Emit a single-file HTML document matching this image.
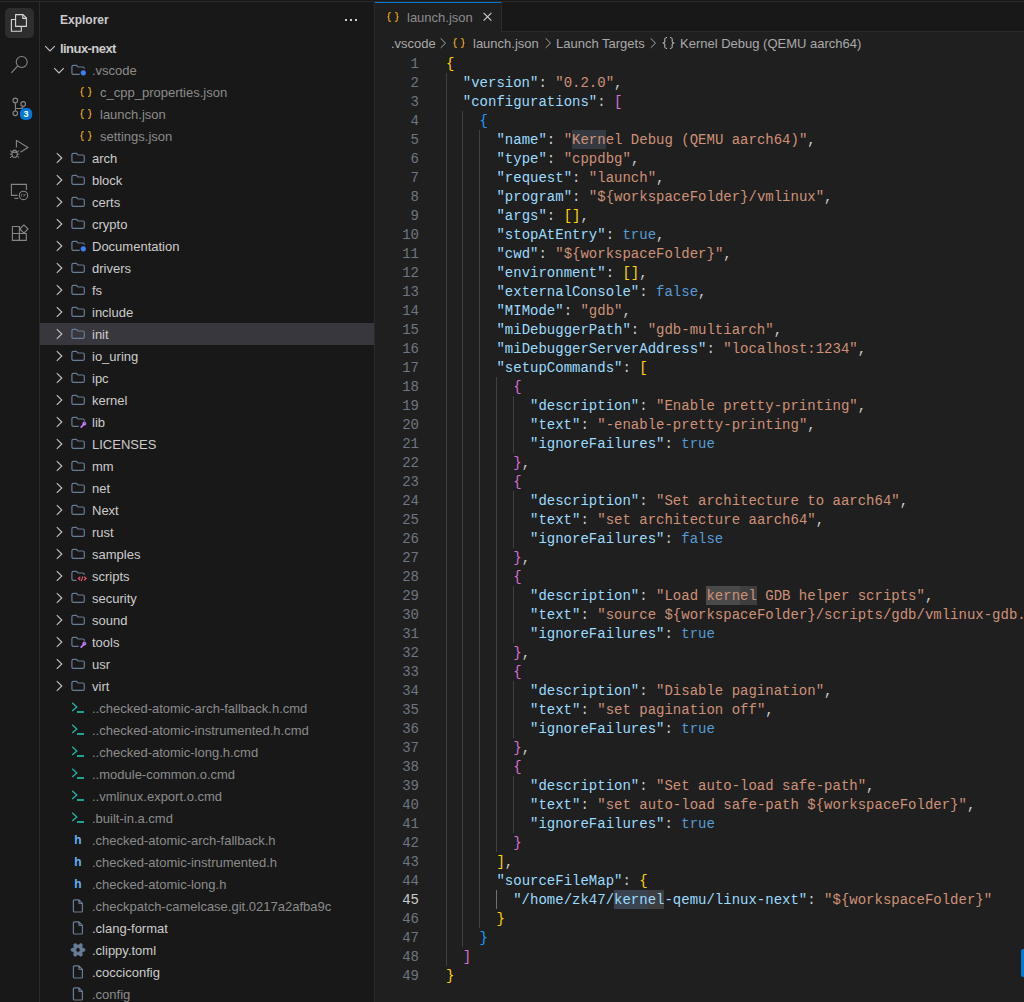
<!DOCTYPE html>
<html><head><meta charset="utf-8"><style>
*{margin:0;padding:0;box-sizing:border-box}
html,body{width:1024px;height:1002px;overflow:hidden;background:#181818}
body{position:relative;font-family:"Liberation Sans",sans-serif;font-size:13px}
.ic{position:absolute;overflow:visible}
.ig{position:absolute;width:1px;height:19px}
.hl{position:absolute;height:19px}
.ln{position:absolute;left:380px;width:39px;height:19px;text-align:right;font:14px/19px "Liberation Mono",monospace}
.cl{position:absolute;left:446px;height:19px;white-space:pre;font:14px/19px "Liberation Mono",monospace}
.tx{position:absolute;height:22px;line-height:22px;white-space:pre;font-size:13px}
.sel{position:absolute;left:40px;width:334px;height:22px;background:#37373d}
.jic{position:absolute;width:16px;height:22px;line-height:22px;color:#e8a02f;font:11px/22px "Liberation Sans",sans-serif;text-align:center;letter-spacing:1px}
.hic{position:absolute;width:16px;height:22px;color:#5fb2f5;font:bold 12px/22px "Liberation Sans",sans-serif;text-align:center}
</style></head><body>
<div style="position:absolute;left:0;top:1px;width:1024px;height:1px;background:#2b2b2b"></div>
<div style="position:absolute;left:39px;top:2px;width:1px;height:1000px;background:#2b2b2b"></div>
<div style="position:absolute;left:374px;top:2px;width:1px;height:1000px;background:#2b2b2b"></div>

<div style="position:absolute;left:5px;top:8px;width:29px;height:30px;border-radius:5px;background:#2e2e2e"></div>
<svg class="ic" style="left:0;top:0" width="40" height="250" viewBox="0 0 40 250">
<g fill="none" stroke="#d7d7d7" stroke-width="1.1" stroke-linejoin="round">
<path d="M15.6 14.6H23L26.4 18V26.4H15.6Z"/><path d="M22.8 14.6V18.4H26.4"/><path d="M15.6 19.5H11.4V31.3H21.3V26.4"/>
</g>
<g fill="none" stroke="#868686" stroke-width="1.1">
<circle cx="21.7" cy="62" r="5.5"/><path d="M17.6 66.2L11.3 72.9" stroke-width="1.2"/>
<circle cx="15.3" cy="100.4" r="2.3"/><circle cx="23.2" cy="103.9" r="2.3"/><circle cx="15.3" cy="113.3" r="2.3"/>
<path d="M15.4 102.7V111"/><path d="M15.6 108.5H20.5C22 108.5 23 107.6 23 106.2"/>
<path d="M16.4 147.6V140.4L28 147.5L20.4 152.3" stroke-linejoin="round"/>
<ellipse cx="14.6" cy="154" rx="2.6" ry="3.4"/><path d="M12.3 151.4C12.8 149.6 16.4 149.6 16.9 151.4M10 150.5L12 152.2M19.2 150.5L17.2 152.2M9.8 154.2H12M17.2 154.2H19.4M10 157.8L12 156.2M19.2 157.8L17.2 156.2M11.8 152.4H17.4" stroke-width="1"/>
<path d="M17.6 195.4H11.4V184.4H26.4V190"/><path d="M14.3 198.4H18.4"/><circle cx="23.5" cy="195.4" r="4.2"/><path d="M22 194l-.8 2.6M23.4 194.2l1.4 1.2-1.4 1.2M25.6 194l-.6 1" stroke-width=".8"/>
<path d="M12.4 226.5H19.4V240.4H12.4Z"/><path d="M12.4 233.5H26.3V240.4H19.4V233.5"/><path d="M23.9 224.9L28 229L23.9 233.1L19.8 229Z" stroke-linejoin="round"/>
</g>
<rect x="20" y="108" width="12.2" height="12" rx="5" fill="#0078d4"/>
</svg>
<div style="position:absolute;left:20px;top:108px;width:12.2px;height:12px;color:#fff;font:bold 9px/12px 'Liberation Sans',sans-serif;text-align:center">3</div>

<div style="position:absolute;left:60px;top:3px;height:35px;line-height:35px;color:#cccccc;font-weight:bold;font-size:12px">Explorer</div>
<div style="position:absolute;left:345px;top:19px;width:2px;height:2px;background:#cccccc"></div><div style="position:absolute;left:350px;top:19px;width:2px;height:2px;background:#cccccc"></div><div style="position:absolute;left:355px;top:19px;width:2px;height:2px;background:#cccccc"></div>
<svg class="ic" style="left:42px;top:40px" width="16" height="16" viewBox="0 0 16 16"><path d="M3.2 6.2l4.8 4.8 4.8-4.8" fill="none" stroke="#c5c5c5" stroke-width="1.1"/></svg><div class="tx" style="left:60px;top:38px;color:#cccccc;font-weight:bold;letter-spacing:-0.55px;">linux-next</div><svg class="ic" style="left:51px;top:62px" width="16" height="16" viewBox="0 0 16 16"><path d="M3.2 6.2l4.8 4.8 4.8-4.8" fill="none" stroke="#c5c5c5" stroke-width="1.1"/></svg><svg class="ic" style="left:70px;top:62px" width="16" height="16" viewBox="0 0 16 16"><path d="M9.8 12.3H3.3C2.5 12.3 1.9 11.7 1.9 10.9V4.8C1.9 4 2.5 3.4 3.3 3.4H6.4L8 5H12.9C13.7 5 14.3 5.6 14.3 6.4V6.8" fill="none" stroke="#687c96" stroke-width="1.2" stroke-linejoin="round"/><circle cx="13.3" cy="10.8" r="2.6" fill="#3e7ff5"/></svg><div class="tx" style="left:92px;top:60px;color:#8c8c8c;">.vscode</div><svg class="ic" style="left:78px;top:84px" width="16" height="16" viewBox="0 0 16 16"><path d="M5.4 3.6C4.3 3.6 3.8 4.1 3.8 5V7C3.8 7.6 3.3 8 2.5 8C3.3 8 3.8 8.4 3.8 9V11C3.8 11.9 4.3 12.4 5.4 12.4M10.6 3.6C11.7 3.6 12.2 4.1 12.2 5V7C12.2 7.6 12.7 8 13.5 8C12.7 8 12.2 8.4 12.2 9V11C12.2 11.9 11.7 12.4 10.6 12.4" fill="none" stroke="#e8a11c" stroke-width="1.15" stroke-linecap="round"/></svg><div class="tx" style="left:100px;top:82px;color:#8c8c8c;">c_cpp_properties.json</div><svg class="ic" style="left:78px;top:106px" width="16" height="16" viewBox="0 0 16 16"><path d="M5.4 3.6C4.3 3.6 3.8 4.1 3.8 5V7C3.8 7.6 3.3 8 2.5 8C3.3 8 3.8 8.4 3.8 9V11C3.8 11.9 4.3 12.4 5.4 12.4M10.6 3.6C11.7 3.6 12.2 4.1 12.2 5V7C12.2 7.6 12.7 8 13.5 8C12.7 8 12.2 8.4 12.2 9V11C12.2 11.9 11.7 12.4 10.6 12.4" fill="none" stroke="#e8a11c" stroke-width="1.15" stroke-linecap="round"/></svg><div class="tx" style="left:100px;top:104px;color:#8c8c8c;">launch.json</div><svg class="ic" style="left:78px;top:128px" width="16" height="16" viewBox="0 0 16 16"><path d="M5.4 3.6C4.3 3.6 3.8 4.1 3.8 5V7C3.8 7.6 3.3 8 2.5 8C3.3 8 3.8 8.4 3.8 9V11C3.8 11.9 4.3 12.4 5.4 12.4M10.6 3.6C11.7 3.6 12.2 4.1 12.2 5V7C12.2 7.6 12.7 8 13.5 8C12.7 8 12.2 8.4 12.2 9V11C12.2 11.9 11.7 12.4 10.6 12.4" fill="none" stroke="#e8a11c" stroke-width="1.15" stroke-linecap="round"/></svg><div class="tx" style="left:100px;top:126px;color:#8c8c8c;">settings.json</div><svg class="ic" style="left:51px;top:150px" width="16" height="16" viewBox="0 0 16 16"><path d="M5.8 3.2l5 4.8-5 4.8" fill="none" stroke="#c5c5c5" stroke-width="1.1"/></svg><svg class="ic" style="left:70px;top:150px" width="16" height="16" viewBox="0 0 16 16"><path d="M1.9 4.8C1.9 4 2.5 3.4 3.3 3.4H6.4L8 5H12.9C13.7 5 14.3 5.6 14.3 6.4V10.9C14.3 11.7 13.7 12.3 12.9 12.3H3.3C2.5 12.3 1.9 11.7 1.9 10.9Z" fill="none" stroke="#687c96" stroke-width="1.2" stroke-linejoin="round"/></svg><div class="tx" style="left:92px;top:148px;color:#cccccc;">arch</div><svg class="ic" style="left:51px;top:172px" width="16" height="16" viewBox="0 0 16 16"><path d="M5.8 3.2l5 4.8-5 4.8" fill="none" stroke="#c5c5c5" stroke-width="1.1"/></svg><svg class="ic" style="left:70px;top:172px" width="16" height="16" viewBox="0 0 16 16"><path d="M1.9 4.8C1.9 4 2.5 3.4 3.3 3.4H6.4L8 5H12.9C13.7 5 14.3 5.6 14.3 6.4V10.9C14.3 11.7 13.7 12.3 12.9 12.3H3.3C2.5 12.3 1.9 11.7 1.9 10.9Z" fill="none" stroke="#687c96" stroke-width="1.2" stroke-linejoin="round"/></svg><div class="tx" style="left:92px;top:170px;color:#cccccc;">block</div><svg class="ic" style="left:51px;top:194px" width="16" height="16" viewBox="0 0 16 16"><path d="M5.8 3.2l5 4.8-5 4.8" fill="none" stroke="#c5c5c5" stroke-width="1.1"/></svg><svg class="ic" style="left:70px;top:194px" width="16" height="16" viewBox="0 0 16 16"><path d="M1.9 4.8C1.9 4 2.5 3.4 3.3 3.4H6.4L8 5H12.9C13.7 5 14.3 5.6 14.3 6.4V10.9C14.3 11.7 13.7 12.3 12.9 12.3H3.3C2.5 12.3 1.9 11.7 1.9 10.9Z" fill="none" stroke="#687c96" stroke-width="1.2" stroke-linejoin="round"/></svg><div class="tx" style="left:92px;top:192px;color:#cccccc;">certs</div><svg class="ic" style="left:51px;top:216px" width="16" height="16" viewBox="0 0 16 16"><path d="M5.8 3.2l5 4.8-5 4.8" fill="none" stroke="#c5c5c5" stroke-width="1.1"/></svg><svg class="ic" style="left:70px;top:216px" width="16" height="16" viewBox="0 0 16 16"><path d="M1.9 4.8C1.9 4 2.5 3.4 3.3 3.4H6.4L8 5H12.9C13.7 5 14.3 5.6 14.3 6.4V10.9C14.3 11.7 13.7 12.3 12.9 12.3H3.3C2.5 12.3 1.9 11.7 1.9 10.9Z" fill="none" stroke="#687c96" stroke-width="1.2" stroke-linejoin="round"/></svg><div class="tx" style="left:92px;top:214px;color:#cccccc;">crypto</div><svg class="ic" style="left:51px;top:238px" width="16" height="16" viewBox="0 0 16 16"><path d="M5.8 3.2l5 4.8-5 4.8" fill="none" stroke="#c5c5c5" stroke-width="1.1"/></svg><svg class="ic" style="left:70px;top:238px" width="16" height="16" viewBox="0 0 16 16"><path d="M9.8 12.3H3.3C2.5 12.3 1.9 11.7 1.9 10.9V4.8C1.9 4 2.5 3.4 3.3 3.4H6.4L8 5H12.9C13.7 5 14.3 5.6 14.3 6.4V6.8" fill="none" stroke="#687c96" stroke-width="1.2" stroke-linejoin="round"/><circle cx="13.3" cy="10.8" r="2.6" fill="#3e7ff5"/></svg><div class="tx" style="left:92px;top:236px;color:#cccccc;">Documentation</div><svg class="ic" style="left:51px;top:260px" width="16" height="16" viewBox="0 0 16 16"><path d="M5.8 3.2l5 4.8-5 4.8" fill="none" stroke="#c5c5c5" stroke-width="1.1"/></svg><svg class="ic" style="left:70px;top:260px" width="16" height="16" viewBox="0 0 16 16"><path d="M1.9 4.8C1.9 4 2.5 3.4 3.3 3.4H6.4L8 5H12.9C13.7 5 14.3 5.6 14.3 6.4V10.9C14.3 11.7 13.7 12.3 12.9 12.3H3.3C2.5 12.3 1.9 11.7 1.9 10.9Z" fill="none" stroke="#687c96" stroke-width="1.2" stroke-linejoin="round"/></svg><div class="tx" style="left:92px;top:258px;color:#cccccc;">drivers</div><svg class="ic" style="left:51px;top:282px" width="16" height="16" viewBox="0 0 16 16"><path d="M5.8 3.2l5 4.8-5 4.8" fill="none" stroke="#c5c5c5" stroke-width="1.1"/></svg><svg class="ic" style="left:70px;top:282px" width="16" height="16" viewBox="0 0 16 16"><path d="M1.9 4.8C1.9 4 2.5 3.4 3.3 3.4H6.4L8 5H12.9C13.7 5 14.3 5.6 14.3 6.4V10.9C14.3 11.7 13.7 12.3 12.9 12.3H3.3C2.5 12.3 1.9 11.7 1.9 10.9Z" fill="none" stroke="#687c96" stroke-width="1.2" stroke-linejoin="round"/></svg><div class="tx" style="left:92px;top:280px;color:#cccccc;">fs</div><svg class="ic" style="left:51px;top:304px" width="16" height="16" viewBox="0 0 16 16"><path d="M5.8 3.2l5 4.8-5 4.8" fill="none" stroke="#c5c5c5" stroke-width="1.1"/></svg><svg class="ic" style="left:70px;top:304px" width="16" height="16" viewBox="0 0 16 16"><path d="M1.9 4.8C1.9 4 2.5 3.4 3.3 3.4H6.4L8 5H12.9C13.7 5 14.3 5.6 14.3 6.4V10.9C14.3 11.7 13.7 12.3 12.9 12.3H3.3C2.5 12.3 1.9 11.7 1.9 10.9Z" fill="none" stroke="#687c96" stroke-width="1.2" stroke-linejoin="round"/></svg><div class="tx" style="left:92px;top:302px;color:#cccccc;">include</div><div class="sel" style="top:323px"></div><svg class="ic" style="left:51px;top:326px" width="16" height="16" viewBox="0 0 16 16"><path d="M5.8 3.2l5 4.8-5 4.8" fill="none" stroke="#c5c5c5" stroke-width="1.1"/></svg><svg class="ic" style="left:70px;top:326px" width="16" height="16" viewBox="0 0 16 16"><path d="M1.9 4.8C1.9 4 2.5 3.4 3.3 3.4H6.4L8 5H12.9C13.7 5 14.3 5.6 14.3 6.4V10.9C14.3 11.7 13.7 12.3 12.9 12.3H3.3C2.5 12.3 1.9 11.7 1.9 10.9Z" fill="none" stroke="#687c96" stroke-width="1.2" stroke-linejoin="round"/></svg><div class="tx" style="left:92px;top:324px;color:#cccccc;">init</div><svg class="ic" style="left:51px;top:348px" width="16" height="16" viewBox="0 0 16 16"><path d="M5.8 3.2l5 4.8-5 4.8" fill="none" stroke="#c5c5c5" stroke-width="1.1"/></svg><svg class="ic" style="left:70px;top:348px" width="16" height="16" viewBox="0 0 16 16"><path d="M1.9 4.8C1.9 4 2.5 3.4 3.3 3.4H6.4L8 5H12.9C13.7 5 14.3 5.6 14.3 6.4V10.9C14.3 11.7 13.7 12.3 12.9 12.3H3.3C2.5 12.3 1.9 11.7 1.9 10.9Z" fill="none" stroke="#687c96" stroke-width="1.2" stroke-linejoin="round"/></svg><div class="tx" style="left:92px;top:346px;color:#cccccc;">io_uring</div><svg class="ic" style="left:51px;top:370px" width="16" height="16" viewBox="0 0 16 16"><path d="M5.8 3.2l5 4.8-5 4.8" fill="none" stroke="#c5c5c5" stroke-width="1.1"/></svg><svg class="ic" style="left:70px;top:370px" width="16" height="16" viewBox="0 0 16 16"><path d="M1.9 4.8C1.9 4 2.5 3.4 3.3 3.4H6.4L8 5H12.9C13.7 5 14.3 5.6 14.3 6.4V10.9C14.3 11.7 13.7 12.3 12.9 12.3H3.3C2.5 12.3 1.9 11.7 1.9 10.9Z" fill="none" stroke="#687c96" stroke-width="1.2" stroke-linejoin="round"/></svg><div class="tx" style="left:92px;top:368px;color:#cccccc;">ipc</div><svg class="ic" style="left:51px;top:392px" width="16" height="16" viewBox="0 0 16 16"><path d="M5.8 3.2l5 4.8-5 4.8" fill="none" stroke="#c5c5c5" stroke-width="1.1"/></svg><svg class="ic" style="left:70px;top:392px" width="16" height="16" viewBox="0 0 16 16"><path d="M1.9 4.8C1.9 4 2.5 3.4 3.3 3.4H6.4L8 5H12.9C13.7 5 14.3 5.6 14.3 6.4V10.9C14.3 11.7 13.7 12.3 12.9 12.3H3.3C2.5 12.3 1.9 11.7 1.9 10.9Z" fill="none" stroke="#687c96" stroke-width="1.2" stroke-linejoin="round"/></svg><div class="tx" style="left:92px;top:390px;color:#cccccc;">kernel</div><svg class="ic" style="left:51px;top:414px" width="16" height="16" viewBox="0 0 16 16"><path d="M5.8 3.2l5 4.8-5 4.8" fill="none" stroke="#c5c5c5" stroke-width="1.1"/></svg><svg class="ic" style="left:70px;top:414px" width="16" height="16" viewBox="0 0 16 16"><path d="M8.6 12.3H3.3C2.5 12.3 1.9 11.7 1.9 10.9V4.8C1.9 4 2.5 3.4 3.3 3.4H6.4L8 5H12.9C13.7 5 14.3 5.6 14.3 6.4V6.8" fill="none" stroke="#687c96" stroke-width="1.2" stroke-linejoin="round"/><path d="M11.2 13.1L14 10.2" stroke="#c77dff" stroke-width="1.7" stroke-linecap="round"/><circle cx="14.4" cy="9.5" r="1.9" fill="#c77dff"/><circle cx="14.9" cy="9" r=".6" fill="#181818"/></svg><div class="tx" style="left:92px;top:412px;color:#cccccc;">lib</div><svg class="ic" style="left:51px;top:436px" width="16" height="16" viewBox="0 0 16 16"><path d="M5.8 3.2l5 4.8-5 4.8" fill="none" stroke="#c5c5c5" stroke-width="1.1"/></svg><svg class="ic" style="left:70px;top:436px" width="16" height="16" viewBox="0 0 16 16"><path d="M1.9 4.8C1.9 4 2.5 3.4 3.3 3.4H6.4L8 5H12.9C13.7 5 14.3 5.6 14.3 6.4V10.9C14.3 11.7 13.7 12.3 12.9 12.3H3.3C2.5 12.3 1.9 11.7 1.9 10.9Z" fill="none" stroke="#687c96" stroke-width="1.2" stroke-linejoin="round"/></svg><div class="tx" style="left:92px;top:434px;color:#cccccc;">LICENSES</div><svg class="ic" style="left:51px;top:458px" width="16" height="16" viewBox="0 0 16 16"><path d="M5.8 3.2l5 4.8-5 4.8" fill="none" stroke="#c5c5c5" stroke-width="1.1"/></svg><svg class="ic" style="left:70px;top:458px" width="16" height="16" viewBox="0 0 16 16"><path d="M1.9 4.8C1.9 4 2.5 3.4 3.3 3.4H6.4L8 5H12.9C13.7 5 14.3 5.6 14.3 6.4V10.9C14.3 11.7 13.7 12.3 12.9 12.3H3.3C2.5 12.3 1.9 11.7 1.9 10.9Z" fill="none" stroke="#687c96" stroke-width="1.2" stroke-linejoin="round"/></svg><div class="tx" style="left:92px;top:456px;color:#cccccc;">mm</div><svg class="ic" style="left:51px;top:480px" width="16" height="16" viewBox="0 0 16 16"><path d="M5.8 3.2l5 4.8-5 4.8" fill="none" stroke="#c5c5c5" stroke-width="1.1"/></svg><svg class="ic" style="left:70px;top:480px" width="16" height="16" viewBox="0 0 16 16"><path d="M1.9 4.8C1.9 4 2.5 3.4 3.3 3.4H6.4L8 5H12.9C13.7 5 14.3 5.6 14.3 6.4V10.9C14.3 11.7 13.7 12.3 12.9 12.3H3.3C2.5 12.3 1.9 11.7 1.9 10.9Z" fill="none" stroke="#687c96" stroke-width="1.2" stroke-linejoin="round"/></svg><div class="tx" style="left:92px;top:478px;color:#cccccc;">net</div><svg class="ic" style="left:51px;top:502px" width="16" height="16" viewBox="0 0 16 16"><path d="M5.8 3.2l5 4.8-5 4.8" fill="none" stroke="#c5c5c5" stroke-width="1.1"/></svg><svg class="ic" style="left:70px;top:502px" width="16" height="16" viewBox="0 0 16 16"><path d="M1.9 4.8C1.9 4 2.5 3.4 3.3 3.4H6.4L8 5H12.9C13.7 5 14.3 5.6 14.3 6.4V10.9C14.3 11.7 13.7 12.3 12.9 12.3H3.3C2.5 12.3 1.9 11.7 1.9 10.9Z" fill="none" stroke="#687c96" stroke-width="1.2" stroke-linejoin="round"/></svg><div class="tx" style="left:92px;top:500px;color:#cccccc;">Next</div><svg class="ic" style="left:51px;top:524px" width="16" height="16" viewBox="0 0 16 16"><path d="M5.8 3.2l5 4.8-5 4.8" fill="none" stroke="#c5c5c5" stroke-width="1.1"/></svg><svg class="ic" style="left:70px;top:524px" width="16" height="16" viewBox="0 0 16 16"><path d="M1.9 4.8C1.9 4 2.5 3.4 3.3 3.4H6.4L8 5H12.9C13.7 5 14.3 5.6 14.3 6.4V10.9C14.3 11.7 13.7 12.3 12.9 12.3H3.3C2.5 12.3 1.9 11.7 1.9 10.9Z" fill="none" stroke="#687c96" stroke-width="1.2" stroke-linejoin="round"/></svg><div class="tx" style="left:92px;top:522px;color:#cccccc;">rust</div><svg class="ic" style="left:51px;top:546px" width="16" height="16" viewBox="0 0 16 16"><path d="M5.8 3.2l5 4.8-5 4.8" fill="none" stroke="#c5c5c5" stroke-width="1.1"/></svg><svg class="ic" style="left:70px;top:546px" width="16" height="16" viewBox="0 0 16 16"><path d="M1.9 4.8C1.9 4 2.5 3.4 3.3 3.4H6.4L8 5H12.9C13.7 5 14.3 5.6 14.3 6.4V10.9C14.3 11.7 13.7 12.3 12.9 12.3H3.3C2.5 12.3 1.9 11.7 1.9 10.9Z" fill="none" stroke="#687c96" stroke-width="1.2" stroke-linejoin="round"/></svg><div class="tx" style="left:92px;top:544px;color:#cccccc;">samples</div><svg class="ic" style="left:51px;top:568px" width="16" height="16" viewBox="0 0 16 16"><path d="M5.8 3.2l5 4.8-5 4.8" fill="none" stroke="#c5c5c5" stroke-width="1.1"/></svg><svg class="ic" style="left:70px;top:568px" width="16" height="16" viewBox="0 0 16 16"><path d="M6.5 12.3H3.3C2.5 12.3 1.9 11.7 1.9 10.9V4.8C1.9 4 2.5 3.4 3.3 3.4H6.4L8 5H12.9C13.7 5 14.3 5.6 14.3 6.4V6.8" fill="none" stroke="#687c96" stroke-width="1.2" stroke-linejoin="round"/><path d="M10.4 8.8L8.3 10.5L10.4 12.2M14.1 8.8L16.2 10.5L14.1 12.2M12.8 8.5L11.3 13.1" fill="none" stroke="#e8556a" stroke-width="1.1"/></svg><div class="tx" style="left:92px;top:566px;color:#cccccc;">scripts</div><svg class="ic" style="left:51px;top:590px" width="16" height="16" viewBox="0 0 16 16"><path d="M5.8 3.2l5 4.8-5 4.8" fill="none" stroke="#c5c5c5" stroke-width="1.1"/></svg><svg class="ic" style="left:70px;top:590px" width="16" height="16" viewBox="0 0 16 16"><path d="M1.9 4.8C1.9 4 2.5 3.4 3.3 3.4H6.4L8 5H12.9C13.7 5 14.3 5.6 14.3 6.4V10.9C14.3 11.7 13.7 12.3 12.9 12.3H3.3C2.5 12.3 1.9 11.7 1.9 10.9Z" fill="none" stroke="#687c96" stroke-width="1.2" stroke-linejoin="round"/></svg><div class="tx" style="left:92px;top:588px;color:#cccccc;">security</div><svg class="ic" style="left:51px;top:612px" width="16" height="16" viewBox="0 0 16 16"><path d="M5.8 3.2l5 4.8-5 4.8" fill="none" stroke="#c5c5c5" stroke-width="1.1"/></svg><svg class="ic" style="left:70px;top:612px" width="16" height="16" viewBox="0 0 16 16"><path d="M1.9 4.8C1.9 4 2.5 3.4 3.3 3.4H6.4L8 5H12.9C13.7 5 14.3 5.6 14.3 6.4V10.9C14.3 11.7 13.7 12.3 12.9 12.3H3.3C2.5 12.3 1.9 11.7 1.9 10.9Z" fill="none" stroke="#687c96" stroke-width="1.2" stroke-linejoin="round"/></svg><div class="tx" style="left:92px;top:610px;color:#cccccc;">sound</div><svg class="ic" style="left:51px;top:634px" width="16" height="16" viewBox="0 0 16 16"><path d="M5.8 3.2l5 4.8-5 4.8" fill="none" stroke="#c5c5c5" stroke-width="1.1"/></svg><svg class="ic" style="left:70px;top:634px" width="16" height="16" viewBox="0 0 16 16"><path d="M8.6 12.3H3.3C2.5 12.3 1.9 11.7 1.9 10.9V4.8C1.9 4 2.5 3.4 3.3 3.4H6.4L8 5H12.9C13.7 5 14.3 5.6 14.3 6.4V6.8" fill="none" stroke="#687c96" stroke-width="1.2" stroke-linejoin="round"/><path d="M11.2 13.1L14 10.2" stroke="#c77dff" stroke-width="1.7" stroke-linecap="round"/><circle cx="14.4" cy="9.5" r="1.9" fill="#c77dff"/><circle cx="14.9" cy="9" r=".6" fill="#181818"/></svg><div class="tx" style="left:92px;top:632px;color:#cccccc;">tools</div><svg class="ic" style="left:51px;top:656px" width="16" height="16" viewBox="0 0 16 16"><path d="M5.8 3.2l5 4.8-5 4.8" fill="none" stroke="#c5c5c5" stroke-width="1.1"/></svg><svg class="ic" style="left:70px;top:656px" width="16" height="16" viewBox="0 0 16 16"><path d="M1.9 4.8C1.9 4 2.5 3.4 3.3 3.4H6.4L8 5H12.9C13.7 5 14.3 5.6 14.3 6.4V10.9C14.3 11.7 13.7 12.3 12.9 12.3H3.3C2.5 12.3 1.9 11.7 1.9 10.9Z" fill="none" stroke="#687c96" stroke-width="1.2" stroke-linejoin="round"/></svg><div class="tx" style="left:92px;top:654px;color:#cccccc;">usr</div><svg class="ic" style="left:51px;top:678px" width="16" height="16" viewBox="0 0 16 16"><path d="M5.8 3.2l5 4.8-5 4.8" fill="none" stroke="#c5c5c5" stroke-width="1.1"/></svg><svg class="ic" style="left:70px;top:678px" width="16" height="16" viewBox="0 0 16 16"><path d="M1.9 4.8C1.9 4 2.5 3.4 3.3 3.4H6.4L8 5H12.9C13.7 5 14.3 5.6 14.3 6.4V10.9C14.3 11.7 13.7 12.3 12.9 12.3H3.3C2.5 12.3 1.9 11.7 1.9 10.9Z" fill="none" stroke="#687c96" stroke-width="1.2" stroke-linejoin="round"/></svg><div class="tx" style="left:92px;top:676px;color:#cccccc;">virt</div><svg class="ic" style="left:70px;top:700px" width="16" height="16" viewBox="0 0 16 16"><path d="M2.2 2.8l4.6 4.1-4.6 4.1" fill="none" stroke="#1fb5a4" stroke-width="1.3"/><path d="M7 12h7" stroke="#1fb5a4" stroke-width="1.8"/></svg><div class="tx" style="left:92px;top:698px;color:#8c8c8c;">..checked-atomic-arch-fallback.h.cmd</div><svg class="ic" style="left:70px;top:722px" width="16" height="16" viewBox="0 0 16 16"><path d="M2.2 2.8l4.6 4.1-4.6 4.1" fill="none" stroke="#1fb5a4" stroke-width="1.3"/><path d="M7 12h7" stroke="#1fb5a4" stroke-width="1.8"/></svg><div class="tx" style="left:92px;top:720px;color:#8c8c8c;">..checked-atomic-instrumented.h.cmd</div><svg class="ic" style="left:70px;top:744px" width="16" height="16" viewBox="0 0 16 16"><path d="M2.2 2.8l4.6 4.1-4.6 4.1" fill="none" stroke="#1fb5a4" stroke-width="1.3"/><path d="M7 12h7" stroke="#1fb5a4" stroke-width="1.8"/></svg><div class="tx" style="left:92px;top:742px;color:#8c8c8c;">..checked-atomic-long.h.cmd</div><svg class="ic" style="left:70px;top:766px" width="16" height="16" viewBox="0 0 16 16"><path d="M2.2 2.8l4.6 4.1-4.6 4.1" fill="none" stroke="#1fb5a4" stroke-width="1.3"/><path d="M7 12h7" stroke="#1fb5a4" stroke-width="1.8"/></svg><div class="tx" style="left:92px;top:764px;color:#8c8c8c;">..module-common.o.cmd</div><svg class="ic" style="left:70px;top:788px" width="16" height="16" viewBox="0 0 16 16"><path d="M2.2 2.8l4.6 4.1-4.6 4.1" fill="none" stroke="#1fb5a4" stroke-width="1.3"/><path d="M7 12h7" stroke="#1fb5a4" stroke-width="1.8"/></svg><div class="tx" style="left:92px;top:786px;color:#8c8c8c;">..vmlinux.export.o.cmd</div><svg class="ic" style="left:70px;top:810px" width="16" height="16" viewBox="0 0 16 16"><path d="M2.2 2.8l4.6 4.1-4.6 4.1" fill="none" stroke="#1fb5a4" stroke-width="1.3"/><path d="M7 12h7" stroke="#1fb5a4" stroke-width="1.8"/></svg><div class="tx" style="left:92px;top:808px;color:#8c8c8c;">.built-in.a.cmd</div><div class="hic" style="left:70px;top:829px">h</div><div class="tx" style="left:92px;top:830px;color:#8c8c8c;">.checked-atomic-arch-fallback.h</div><div class="hic" style="left:70px;top:851px">h</div><div class="tx" style="left:92px;top:852px;color:#8c8c8c;">.checked-atomic-instrumented.h</div><div class="hic" style="left:70px;top:873px">h</div><div class="tx" style="left:92px;top:874px;color:#8c8c8c;">.checked-atomic-long.h</div><svg class="ic" style="left:70px;top:898px" width="16" height="16" viewBox="0 0 16 16"><path d="M4.4 1.9H8.9L12.4 5.5V13C12.4 13.6 11.9 14 11.3 14H4.4C3.8 14 3.4 13.6 3.4 13V2.9C3.4 2.3 3.8 1.9 4.4 1.9Z M8.9 1.9V4.6C8.9 5.1 9.2 5.5 9.7 5.5H12.4" fill="none" stroke="#687c96" stroke-width="1.2" stroke-linejoin="round"/></svg><div class="tx" style="left:92px;top:896px;color:#8c8c8c;">.checkpatch-camelcase.git.0217a2afba9c</div><svg class="ic" style="left:70px;top:920px" width="16" height="16" viewBox="0 0 16 16"><path d="M4.4 1.9H8.9L12.4 5.5V13C12.4 13.6 11.9 14 11.3 14H4.4C3.8 14 3.4 13.6 3.4 13V2.9C3.4 2.3 3.8 1.9 4.4 1.9Z M8.9 1.9V4.6C8.9 5.1 9.2 5.5 9.7 5.5H12.4" fill="none" stroke="#687c96" stroke-width="1.2" stroke-linejoin="round"/></svg><div class="tx" style="left:92px;top:918px;color:#cccccc;">.clang-format</div><svg class="ic" style="left:70px;top:942px" width="16" height="16" viewBox="0 0 16 16"><path fill="#687c96" fill-rule="evenodd" stroke="#687c96" stroke-width="0.9" stroke-linejoin="round" d="M14.83 8.86 L14.83 6.94 L11.81 5.70 L12.25 2.46 L10.58 1.50 L8.00 3.50 L5.42 1.50 L3.75 2.46 L4.19 5.70 L1.17 6.94 L1.17 8.86 L4.19 10.10 L3.75 13.34 L5.42 14.30 L8.00 12.30 L10.58 14.30 L12.25 13.34 L11.81 10.10Z M8 5.5C6.8 5.5 5.8 6.6 5.8 7.9C5.8 9.2 6.8 10.3 8 10.3C9.2 10.3 10.2 9.2 10.2 7.9C10.2 6.6 9.2 5.5 8 5.5Z"/></svg><div class="tx" style="left:92px;top:940px;color:#cccccc;">.clippy.toml</div><svg class="ic" style="left:70px;top:964px" width="16" height="16" viewBox="0 0 16 16"><path d="M4.4 1.9H8.9L12.4 5.5V13C12.4 13.6 11.9 14 11.3 14H4.4C3.8 14 3.4 13.6 3.4 13V2.9C3.4 2.3 3.8 1.9 4.4 1.9Z M8.9 1.9V4.6C8.9 5.1 9.2 5.5 9.7 5.5H12.4" fill="none" stroke="#687c96" stroke-width="1.2" stroke-linejoin="round"/></svg><div class="tx" style="left:92px;top:962px;color:#cccccc;">.cocciconfig</div><svg class="ic" style="left:70px;top:986px" width="16" height="16" viewBox="0 0 16 16"><path d="M4.4 1.9H8.9L12.4 5.5V13C12.4 13.6 11.9 14 11.3 14H4.4C3.8 14 3.4 13.6 3.4 13V2.9C3.4 2.3 3.8 1.9 4.4 1.9Z M8.9 1.9V4.6C8.9 5.1 9.2 5.5 9.7 5.5H12.4" fill="none" stroke="#687c96" stroke-width="1.2" stroke-linejoin="round"/></svg><div class="tx" style="left:92px;top:984px;color:#8c8c8c;">.config</div>
<div style="position:absolute;left:375px;top:2px;width:649px;height:1000px;background:#1f1f1f"></div>
<div style="position:absolute;left:375px;top:2px;width:649px;height:29px;background:#181818"></div>
<div style="position:absolute;left:375px;top:31px;width:649px;height:1px;background:#2b2b2b"></div>
<div style="position:absolute;left:375px;top:2px;width:126px;height:30px;background:#1f1f1f"></div>
<div style="position:absolute;left:375px;top:2px;width:126px;height:1px;background:#0078d4"></div>
<div style="position:absolute;left:501px;top:2px;width:1px;height:29px;background:#2b2b2b"></div>
<svg class="ic" style="left:385px;top:9px" width="16" height="16" viewBox="0 0 16 16"><path d="M5.4 3.6C4.3 3.6 3.8 4.1 3.8 5V7C3.8 7.6 3.3 8 2.5 8C3.3 8 3.8 8.4 3.8 9V11C3.8 11.9 4.3 12.4 5.4 12.4M10.6 3.6C11.7 3.6 12.2 4.1 12.2 5V7C12.2 7.6 12.7 8 13.5 8C12.7 8 12.2 8.4 12.2 9V11C12.2 11.9 11.7 12.4 10.6 12.4" fill="none" stroke="#e8a11c" stroke-width="1.15" stroke-linecap="round"/></svg>
<div class="tx" style="left:407px;top:7px;color:#8c8c8c">launch.json</div>
<svg class="ic" style="left:480px;top:9px" width="16" height="16" viewBox="0 0 16 16"><path d="M3.6 3.9L11.4 11.7M11.4 3.9L3.6 11.7" stroke="#cccccc" stroke-width="1.15"/></svg>
<div class="tx" style="left:391px;top:33px;color:#a9a9a9">.vscode</div>
<svg class="ic" style="left:435px;top:35px" width="16" height="16" viewBox="0 0 16 16"><path d="M5.7 3.4l4.8 4.7-4.8 4.7" fill="none" stroke="#a9a9a9" stroke-width="1"/></svg>
<svg class="ic" style="left:451px;top:35px" width="16" height="16" viewBox="0 0 16 16"><path d="M5.4 3.6C4.3 3.6 3.8 4.1 3.8 5V7C3.8 7.6 3.3 8 2.5 8C3.3 8 3.8 8.4 3.8 9V11C3.8 11.9 4.3 12.4 5.4 12.4M10.6 3.6C11.7 3.6 12.2 4.1 12.2 5V7C12.2 7.6 12.7 8 13.5 8C12.7 8 12.2 8.4 12.2 9V11C12.2 11.9 11.7 12.4 10.6 12.4" fill="none" stroke="#e8a11c" stroke-width="1.15" stroke-linecap="round"/></svg>
<div class="tx" style="left:473px;top:33px;color:#a9a9a9">launch.json</div>
<svg class="ic" style="left:540px;top:35px" width="16" height="16" viewBox="0 0 16 16"><path d="M5.7 3.4l4.8 4.7-4.8 4.7" fill="none" stroke="#a9a9a9" stroke-width="1"/></svg>
<div class="tx" style="left:556px;top:33px;color:#a9a9a9">Launch Targets</div>
<svg class="ic" style="left:645px;top:35px" width="16" height="16" viewBox="0 0 16 16"><path d="M5.7 3.4l4.8 4.7-4.8 4.7" fill="none" stroke="#a9a9a9" stroke-width="1"/></svg>
<svg class="ic" style="left:660px;top:35px" width="16" height="16" viewBox="0 0 16 16"><path d="M7 2.5C5.6 2.5 4.8 3.2 4.8 4.3V6.9C4.8 7.5 4.2 8 2.8 8C4.2 8 4.8 8.5 4.8 9.1V11.7C4.8 12.8 5.6 13.5 7 13.5M10 2.5C11.4 2.5 12.2 3.2 12.2 4.3V6.9C12.2 7.5 12.8 8 14.2 8C12.8 8 12.2 8.5 12.2 9.1V11.7C12.2 12.8 11.4 13.5 10 13.5" fill="none" stroke="#cccccc" stroke-width="1"/></svg>
<div class="tx" style="left:680px;top:33px;color:#a9a9a9">Kernel Debug (QEMU aarch64)</div>
<div class="ig" style="left:445.5px;top:73px;background:#404040"></div><div class="ig" style="left:445.5px;top:92px;background:#404040"></div><div class="ig" style="left:445.5px;top:111px;background:#404040"></div><div class="ig" style="left:462.3px;top:111px;background:#404040"></div><div class="ig" style="left:445.5px;top:130px;background:#404040"></div><div class="ig" style="left:462.3px;top:130px;background:#404040"></div><div class="ig" style="left:479.1px;top:130px;background:#404040"></div><div class="ig" style="left:445.5px;top:149px;background:#404040"></div><div class="ig" style="left:462.3px;top:149px;background:#404040"></div><div class="ig" style="left:479.1px;top:149px;background:#404040"></div><div class="ig" style="left:445.5px;top:168px;background:#404040"></div><div class="ig" style="left:462.3px;top:168px;background:#404040"></div><div class="ig" style="left:479.1px;top:168px;background:#404040"></div><div class="ig" style="left:445.5px;top:187px;background:#404040"></div><div class="ig" style="left:462.3px;top:187px;background:#404040"></div><div class="ig" style="left:479.1px;top:187px;background:#404040"></div><div class="ig" style="left:445.5px;top:206px;background:#404040"></div><div class="ig" style="left:462.3px;top:206px;background:#404040"></div><div class="ig" style="left:479.1px;top:206px;background:#404040"></div><div class="ig" style="left:445.5px;top:225px;background:#404040"></div><div class="ig" style="left:462.3px;top:225px;background:#404040"></div><div class="ig" style="left:479.1px;top:225px;background:#404040"></div><div class="ig" style="left:445.5px;top:244px;background:#404040"></div><div class="ig" style="left:462.3px;top:244px;background:#404040"></div><div class="ig" style="left:479.1px;top:244px;background:#404040"></div><div class="ig" style="left:445.5px;top:263px;background:#404040"></div><div class="ig" style="left:462.3px;top:263px;background:#404040"></div><div class="ig" style="left:479.1px;top:263px;background:#404040"></div><div class="ig" style="left:445.5px;top:282px;background:#404040"></div><div class="ig" style="left:462.3px;top:282px;background:#404040"></div><div class="ig" style="left:479.1px;top:282px;background:#404040"></div><div class="ig" style="left:445.5px;top:301px;background:#404040"></div><div class="ig" style="left:462.3px;top:301px;background:#404040"></div><div class="ig" style="left:479.1px;top:301px;background:#404040"></div><div class="ig" style="left:445.5px;top:320px;background:#404040"></div><div class="ig" style="left:462.3px;top:320px;background:#404040"></div><div class="ig" style="left:479.1px;top:320px;background:#404040"></div><div class="ig" style="left:445.5px;top:339px;background:#404040"></div><div class="ig" style="left:462.3px;top:339px;background:#404040"></div><div class="ig" style="left:479.1px;top:339px;background:#404040"></div><div class="ig" style="left:445.5px;top:358px;background:#404040"></div><div class="ig" style="left:462.3px;top:358px;background:#404040"></div><div class="ig" style="left:479.1px;top:358px;background:#404040"></div><div class="ig" style="left:445.5px;top:377px;background:#404040"></div><div class="ig" style="left:462.3px;top:377px;background:#404040"></div><div class="ig" style="left:479.1px;top:377px;background:#404040"></div><div class="ig" style="left:495.9px;top:377px;background:#404040"></div><div class="ig" style="left:445.5px;top:396px;background:#404040"></div><div class="ig" style="left:462.3px;top:396px;background:#404040"></div><div class="ig" style="left:479.1px;top:396px;background:#404040"></div><div class="ig" style="left:495.9px;top:396px;background:#404040"></div><div class="ig" style="left:512.7px;top:396px;background:#404040"></div><div class="ig" style="left:445.5px;top:415px;background:#404040"></div><div class="ig" style="left:462.3px;top:415px;background:#404040"></div><div class="ig" style="left:479.1px;top:415px;background:#404040"></div><div class="ig" style="left:495.9px;top:415px;background:#404040"></div><div class="ig" style="left:512.7px;top:415px;background:#404040"></div><div class="ig" style="left:445.5px;top:434px;background:#404040"></div><div class="ig" style="left:462.3px;top:434px;background:#404040"></div><div class="ig" style="left:479.1px;top:434px;background:#404040"></div><div class="ig" style="left:495.9px;top:434px;background:#404040"></div><div class="ig" style="left:512.7px;top:434px;background:#404040"></div><div class="ig" style="left:445.5px;top:453px;background:#404040"></div><div class="ig" style="left:462.3px;top:453px;background:#404040"></div><div class="ig" style="left:479.1px;top:453px;background:#404040"></div><div class="ig" style="left:495.9px;top:453px;background:#404040"></div><div class="ig" style="left:445.5px;top:472px;background:#404040"></div><div class="ig" style="left:462.3px;top:472px;background:#404040"></div><div class="ig" style="left:479.1px;top:472px;background:#404040"></div><div class="ig" style="left:495.9px;top:472px;background:#404040"></div><div class="ig" style="left:445.5px;top:491px;background:#404040"></div><div class="ig" style="left:462.3px;top:491px;background:#404040"></div><div class="ig" style="left:479.1px;top:491px;background:#404040"></div><div class="ig" style="left:495.9px;top:491px;background:#404040"></div><div class="ig" style="left:512.7px;top:491px;background:#404040"></div><div class="ig" style="left:445.5px;top:510px;background:#404040"></div><div class="ig" style="left:462.3px;top:510px;background:#404040"></div><div class="ig" style="left:479.1px;top:510px;background:#404040"></div><div class="ig" style="left:495.9px;top:510px;background:#404040"></div><div class="ig" style="left:512.7px;top:510px;background:#404040"></div><div class="ig" style="left:445.5px;top:529px;background:#404040"></div><div class="ig" style="left:462.3px;top:529px;background:#404040"></div><div class="ig" style="left:479.1px;top:529px;background:#404040"></div><div class="ig" style="left:495.9px;top:529px;background:#404040"></div><div class="ig" style="left:512.7px;top:529px;background:#404040"></div><div class="ig" style="left:445.5px;top:548px;background:#404040"></div><div class="ig" style="left:462.3px;top:548px;background:#404040"></div><div class="ig" style="left:479.1px;top:548px;background:#404040"></div><div class="ig" style="left:495.9px;top:548px;background:#404040"></div><div class="ig" style="left:445.5px;top:567px;background:#404040"></div><div class="ig" style="left:462.3px;top:567px;background:#404040"></div><div class="ig" style="left:479.1px;top:567px;background:#404040"></div><div class="ig" style="left:495.9px;top:567px;background:#404040"></div><div class="ig" style="left:445.5px;top:586px;background:#404040"></div><div class="ig" style="left:462.3px;top:586px;background:#404040"></div><div class="ig" style="left:479.1px;top:586px;background:#404040"></div><div class="ig" style="left:495.9px;top:586px;background:#404040"></div><div class="ig" style="left:512.7px;top:586px;background:#404040"></div><div class="ig" style="left:445.5px;top:605px;background:#404040"></div><div class="ig" style="left:462.3px;top:605px;background:#404040"></div><div class="ig" style="left:479.1px;top:605px;background:#404040"></div><div class="ig" style="left:495.9px;top:605px;background:#404040"></div><div class="ig" style="left:512.7px;top:605px;background:#404040"></div><div class="ig" style="left:445.5px;top:624px;background:#404040"></div><div class="ig" style="left:462.3px;top:624px;background:#404040"></div><div class="ig" style="left:479.1px;top:624px;background:#404040"></div><div class="ig" style="left:495.9px;top:624px;background:#404040"></div><div class="ig" style="left:512.7px;top:624px;background:#404040"></div><div class="ig" style="left:445.5px;top:643px;background:#404040"></div><div class="ig" style="left:462.3px;top:643px;background:#404040"></div><div class="ig" style="left:479.1px;top:643px;background:#404040"></div><div class="ig" style="left:495.9px;top:643px;background:#404040"></div><div class="ig" style="left:445.5px;top:662px;background:#404040"></div><div class="ig" style="left:462.3px;top:662px;background:#404040"></div><div class="ig" style="left:479.1px;top:662px;background:#404040"></div><div class="ig" style="left:495.9px;top:662px;background:#404040"></div><div class="ig" style="left:445.5px;top:681px;background:#404040"></div><div class="ig" style="left:462.3px;top:681px;background:#404040"></div><div class="ig" style="left:479.1px;top:681px;background:#404040"></div><div class="ig" style="left:495.9px;top:681px;background:#404040"></div><div class="ig" style="left:512.7px;top:681px;background:#404040"></div><div class="ig" style="left:445.5px;top:700px;background:#404040"></div><div class="ig" style="left:462.3px;top:700px;background:#404040"></div><div class="ig" style="left:479.1px;top:700px;background:#404040"></div><div class="ig" style="left:495.9px;top:700px;background:#404040"></div><div class="ig" style="left:512.7px;top:700px;background:#404040"></div><div class="ig" style="left:445.5px;top:719px;background:#404040"></div><div class="ig" style="left:462.3px;top:719px;background:#404040"></div><div class="ig" style="left:479.1px;top:719px;background:#404040"></div><div class="ig" style="left:495.9px;top:719px;background:#404040"></div><div class="ig" style="left:512.7px;top:719px;background:#404040"></div><div class="ig" style="left:445.5px;top:738px;background:#404040"></div><div class="ig" style="left:462.3px;top:738px;background:#404040"></div><div class="ig" style="left:479.1px;top:738px;background:#404040"></div><div class="ig" style="left:495.9px;top:738px;background:#404040"></div><div class="ig" style="left:445.5px;top:757px;background:#404040"></div><div class="ig" style="left:462.3px;top:757px;background:#404040"></div><div class="ig" style="left:479.1px;top:757px;background:#404040"></div><div class="ig" style="left:495.9px;top:757px;background:#404040"></div><div class="ig" style="left:445.5px;top:776px;background:#404040"></div><div class="ig" style="left:462.3px;top:776px;background:#404040"></div><div class="ig" style="left:479.1px;top:776px;background:#404040"></div><div class="ig" style="left:495.9px;top:776px;background:#404040"></div><div class="ig" style="left:512.7px;top:776px;background:#404040"></div><div class="ig" style="left:445.5px;top:795px;background:#404040"></div><div class="ig" style="left:462.3px;top:795px;background:#404040"></div><div class="ig" style="left:479.1px;top:795px;background:#404040"></div><div class="ig" style="left:495.9px;top:795px;background:#404040"></div><div class="ig" style="left:512.7px;top:795px;background:#404040"></div><div class="ig" style="left:445.5px;top:814px;background:#404040"></div><div class="ig" style="left:462.3px;top:814px;background:#404040"></div><div class="ig" style="left:479.1px;top:814px;background:#404040"></div><div class="ig" style="left:495.9px;top:814px;background:#404040"></div><div class="ig" style="left:512.7px;top:814px;background:#404040"></div><div class="ig" style="left:445.5px;top:833px;background:#404040"></div><div class="ig" style="left:462.3px;top:833px;background:#404040"></div><div class="ig" style="left:479.1px;top:833px;background:#404040"></div><div class="ig" style="left:495.9px;top:833px;background:#404040"></div><div class="ig" style="left:445.5px;top:852px;background:#404040"></div><div class="ig" style="left:462.3px;top:852px;background:#404040"></div><div class="ig" style="left:479.1px;top:852px;background:#404040"></div><div class="ig" style="left:445.5px;top:871px;background:#404040"></div><div class="ig" style="left:462.3px;top:871px;background:#404040"></div><div class="ig" style="left:479.1px;top:871px;background:#404040"></div><div class="ig" style="left:445.5px;top:890px;background:#404040"></div><div class="ig" style="left:462.3px;top:890px;background:#404040"></div><div class="ig" style="left:479.1px;top:890px;background:#404040"></div><div class="ig" style="left:495.9px;top:890px;background:#707070"></div><div class="ig" style="left:445.5px;top:909px;background:#404040"></div><div class="ig" style="left:462.3px;top:909px;background:#404040"></div><div class="ig" style="left:479.1px;top:909px;background:#404040"></div><div class="ig" style="left:445.5px;top:928px;background:#404040"></div><div class="ig" style="left:462.3px;top:928px;background:#404040"></div><div class="ig" style="left:445.5px;top:947px;background:#404040"></div><div class="hl" style="left:572.0px;top:130px;width:33.6px;background:#343a41"></div><div class="hl" style="left:706.4px;top:586px;width:33.6px;background:#4a4a4a"></div><div class="hl" style="left:740.0px;top:586px;width:16.8px;background:#3e3e3e"></div><div class="hl" style="left:614.0px;top:890px;width:33.6px;background:#3a4350"></div><div class="hl" style="left:647.6px;top:890px;width:16.8px;background:#3e3e3e"></div><div class="ln" style="top:55px;color:#6e7681">1</div><div class="cl" style="top:55px"><span style="color:#ffd700">{</span></div><div class="ln" style="top:74px;color:#6e7681">2</div><div class="cl" style="top:74px">  <span style="color:#9cdcfe">&quot;version&quot;</span><span style="color:#cccccc">: </span><span style="color:#ce9178">&quot;0.2.0&quot;</span><span style="color:#cccccc">,</span></div><div class="ln" style="top:93px;color:#6e7681">3</div><div class="cl" style="top:93px">  <span style="color:#9cdcfe">&quot;configurations&quot;</span><span style="color:#cccccc">: </span><span style="color:#da70d6">[</span></div><div class="ln" style="top:112px;color:#6e7681">4</div><div class="cl" style="top:112px">    <span style="color:#179fff">{</span></div><div class="ln" style="top:131px;color:#6e7681">5</div><div class="cl" style="top:131px">      <span style="color:#9cdcfe">&quot;name&quot;</span><span style="color:#cccccc">: </span><span style="color:#ce9178">&quot;Kernel Debug (QEMU aarch64)&quot;</span><span style="color:#cccccc">,</span></div><div class="ln" style="top:150px;color:#6e7681">6</div><div class="cl" style="top:150px">      <span style="color:#9cdcfe">&quot;type&quot;</span><span style="color:#cccccc">: </span><span style="color:#ce9178">&quot;cppdbg&quot;</span><span style="color:#cccccc">,</span></div><div class="ln" style="top:169px;color:#6e7681">7</div><div class="cl" style="top:169px">      <span style="color:#9cdcfe">&quot;request&quot;</span><span style="color:#cccccc">: </span><span style="color:#ce9178">&quot;launch&quot;</span><span style="color:#cccccc">,</span></div><div class="ln" style="top:188px;color:#6e7681">8</div><div class="cl" style="top:188px">      <span style="color:#9cdcfe">&quot;program&quot;</span><span style="color:#cccccc">: </span><span style="color:#ce9178">&quot;${workspaceFolder}/vmlinux&quot;</span><span style="color:#cccccc">,</span></div><div class="ln" style="top:207px;color:#6e7681">9</div><div class="cl" style="top:207px">      <span style="color:#9cdcfe">&quot;args&quot;</span><span style="color:#cccccc">: </span><span style="color:#ffd700">[]</span><span style="color:#cccccc">,</span></div><div class="ln" style="top:226px;color:#6e7681">10</div><div class="cl" style="top:226px">      <span style="color:#9cdcfe">&quot;stopAtEntry&quot;</span><span style="color:#cccccc">: </span><span style="color:#569cd6">true</span><span style="color:#cccccc">,</span></div><div class="ln" style="top:245px;color:#6e7681">11</div><div class="cl" style="top:245px">      <span style="color:#9cdcfe">&quot;cwd&quot;</span><span style="color:#cccccc">: </span><span style="color:#ce9178">&quot;${workspaceFolder}&quot;</span><span style="color:#cccccc">,</span></div><div class="ln" style="top:264px;color:#6e7681">12</div><div class="cl" style="top:264px">      <span style="color:#9cdcfe">&quot;environment&quot;</span><span style="color:#cccccc">: </span><span style="color:#ffd700">[]</span><span style="color:#cccccc">,</span></div><div class="ln" style="top:283px;color:#6e7681">13</div><div class="cl" style="top:283px">      <span style="color:#9cdcfe">&quot;externalConsole&quot;</span><span style="color:#cccccc">: </span><span style="color:#569cd6">false</span><span style="color:#cccccc">,</span></div><div class="ln" style="top:302px;color:#6e7681">14</div><div class="cl" style="top:302px">      <span style="color:#9cdcfe">&quot;MIMode&quot;</span><span style="color:#cccccc">: </span><span style="color:#ce9178">&quot;gdb&quot;</span><span style="color:#cccccc">,</span></div><div class="ln" style="top:321px;color:#6e7681">15</div><div class="cl" style="top:321px">      <span style="color:#9cdcfe">&quot;miDebuggerPath&quot;</span><span style="color:#cccccc">: </span><span style="color:#ce9178">&quot;gdb-multiarch&quot;</span><span style="color:#cccccc">,</span></div><div class="ln" style="top:340px;color:#6e7681">16</div><div class="cl" style="top:340px">      <span style="color:#9cdcfe">&quot;miDebuggerServerAddress&quot;</span><span style="color:#cccccc">: </span><span style="color:#ce9178">&quot;localhost:1234&quot;</span><span style="color:#cccccc">,</span></div><div class="ln" style="top:359px;color:#6e7681">17</div><div class="cl" style="top:359px">      <span style="color:#9cdcfe">&quot;setupCommands&quot;</span><span style="color:#cccccc">: </span><span style="color:#ffd700">[</span></div><div class="ln" style="top:378px;color:#6e7681">18</div><div class="cl" style="top:378px">        <span style="color:#da70d6">{</span></div><div class="ln" style="top:397px;color:#6e7681">19</div><div class="cl" style="top:397px">          <span style="color:#9cdcfe">&quot;description&quot;</span><span style="color:#cccccc">: </span><span style="color:#ce9178">&quot;Enable pretty-printing&quot;</span><span style="color:#cccccc">,</span></div><div class="ln" style="top:416px;color:#6e7681">20</div><div class="cl" style="top:416px">          <span style="color:#9cdcfe">&quot;text&quot;</span><span style="color:#cccccc">: </span><span style="color:#ce9178">&quot;-enable-pretty-printing&quot;</span><span style="color:#cccccc">,</span></div><div class="ln" style="top:435px;color:#6e7681">21</div><div class="cl" style="top:435px">          <span style="color:#9cdcfe">&quot;ignoreFailures&quot;</span><span style="color:#cccccc">: </span><span style="color:#569cd6">true</span></div><div class="ln" style="top:454px;color:#6e7681">22</div><div class="cl" style="top:454px">        <span style="color:#da70d6">}</span><span style="color:#cccccc">,</span></div><div class="ln" style="top:473px;color:#6e7681">23</div><div class="cl" style="top:473px">        <span style="color:#da70d6">{</span></div><div class="ln" style="top:492px;color:#6e7681">24</div><div class="cl" style="top:492px">          <span style="color:#9cdcfe">&quot;description&quot;</span><span style="color:#cccccc">: </span><span style="color:#ce9178">&quot;Set architecture to aarch64&quot;</span><span style="color:#cccccc">,</span></div><div class="ln" style="top:511px;color:#6e7681">25</div><div class="cl" style="top:511px">          <span style="color:#9cdcfe">&quot;text&quot;</span><span style="color:#cccccc">: </span><span style="color:#ce9178">&quot;set architecture aarch64&quot;</span><span style="color:#cccccc">,</span></div><div class="ln" style="top:530px;color:#6e7681">26</div><div class="cl" style="top:530px">          <span style="color:#9cdcfe">&quot;ignoreFailures&quot;</span><span style="color:#cccccc">: </span><span style="color:#569cd6">false</span></div><div class="ln" style="top:549px;color:#6e7681">27</div><div class="cl" style="top:549px">        <span style="color:#da70d6">}</span><span style="color:#cccccc">,</span></div><div class="ln" style="top:568px;color:#6e7681">28</div><div class="cl" style="top:568px">        <span style="color:#da70d6">{</span></div><div class="ln" style="top:587px;color:#6e7681">29</div><div class="cl" style="top:587px">          <span style="color:#9cdcfe">&quot;description&quot;</span><span style="color:#cccccc">: </span><span style="color:#ce9178">&quot;Load kernel GDB helper scripts&quot;</span><span style="color:#cccccc">,</span></div><div class="ln" style="top:606px;color:#6e7681">30</div><div class="cl" style="top:606px">          <span style="color:#9cdcfe">&quot;text&quot;</span><span style="color:#cccccc">: </span><span style="color:#ce9178">&quot;source ${workspaceFolder}/scripts/gdb/vmlinux-gdb.py&quot;</span><span style="color:#cccccc">,</span></div><div class="ln" style="top:625px;color:#6e7681">31</div><div class="cl" style="top:625px">          <span style="color:#9cdcfe">&quot;ignoreFailures&quot;</span><span style="color:#cccccc">: </span><span style="color:#569cd6">true</span></div><div class="ln" style="top:644px;color:#6e7681">32</div><div class="cl" style="top:644px">        <span style="color:#da70d6">}</span><span style="color:#cccccc">,</span></div><div class="ln" style="top:663px;color:#6e7681">33</div><div class="cl" style="top:663px">        <span style="color:#da70d6">{</span></div><div class="ln" style="top:682px;color:#6e7681">34</div><div class="cl" style="top:682px">          <span style="color:#9cdcfe">&quot;description&quot;</span><span style="color:#cccccc">: </span><span style="color:#ce9178">&quot;Disable pagination&quot;</span><span style="color:#cccccc">,</span></div><div class="ln" style="top:701px;color:#6e7681">35</div><div class="cl" style="top:701px">          <span style="color:#9cdcfe">&quot;text&quot;</span><span style="color:#cccccc">: </span><span style="color:#ce9178">&quot;set pagination off&quot;</span><span style="color:#cccccc">,</span></div><div class="ln" style="top:720px;color:#6e7681">36</div><div class="cl" style="top:720px">          <span style="color:#9cdcfe">&quot;ignoreFailures&quot;</span><span style="color:#cccccc">: </span><span style="color:#569cd6">true</span></div><div class="ln" style="top:739px;color:#6e7681">37</div><div class="cl" style="top:739px">        <span style="color:#da70d6">}</span><span style="color:#cccccc">,</span></div><div class="ln" style="top:758px;color:#6e7681">38</div><div class="cl" style="top:758px">        <span style="color:#da70d6">{</span></div><div class="ln" style="top:777px;color:#6e7681">39</div><div class="cl" style="top:777px">          <span style="color:#9cdcfe">&quot;description&quot;</span><span style="color:#cccccc">: </span><span style="color:#ce9178">&quot;Set auto-load safe-path&quot;</span><span style="color:#cccccc">,</span></div><div class="ln" style="top:796px;color:#6e7681">40</div><div class="cl" style="top:796px">          <span style="color:#9cdcfe">&quot;text&quot;</span><span style="color:#cccccc">: </span><span style="color:#ce9178">&quot;set auto-load safe-path ${workspaceFolder}&quot;</span><span style="color:#cccccc">,</span></div><div class="ln" style="top:815px;color:#6e7681">41</div><div class="cl" style="top:815px">          <span style="color:#9cdcfe">&quot;ignoreFailures&quot;</span><span style="color:#cccccc">: </span><span style="color:#569cd6">true</span></div><div class="ln" style="top:834px;color:#6e7681">42</div><div class="cl" style="top:834px">        <span style="color:#da70d6">}</span></div><div class="ln" style="top:853px;color:#6e7681">43</div><div class="cl" style="top:853px">      <span style="color:#ffd700">]</span><span style="color:#cccccc">,</span></div><div class="ln" style="top:872px;color:#6e7681">44</div><div class="cl" style="top:872px">      <span style="color:#9cdcfe">&quot;sourceFileMap&quot;</span><span style="color:#cccccc">: </span><span style="color:#ffd700">{</span></div><div class="ln" style="top:891px;color:#cccccc">45</div><div class="cl" style="top:891px">        <span style="color:#9cdcfe">&quot;/home/zk47/kernel-qemu/linux-next&quot;</span><span style="color:#cccccc">: </span><span style="color:#ce9178">&quot;${workspaceFolder}&quot;</span></div><div class="ln" style="top:910px;color:#6e7681">46</div><div class="cl" style="top:910px">      <span style="color:#ffd700">}</span></div><div class="ln" style="top:929px;color:#6e7681">47</div><div class="cl" style="top:929px">    <span style="color:#179fff">}</span></div><div class="ln" style="top:948px;color:#6e7681">48</div><div class="cl" style="top:948px">  <span style="color:#da70d6">]</span></div><div class="ln" style="top:967px;color:#6e7681">49</div><div class="cl" style="top:967px"><span style="color:#ffd700">}</span></div>
<div style="position:absolute;left:1021px;top:949px;width:3px;height:28px;background:#0078d4;border-radius:2px 0 0 2px"></div>
</body></html>
